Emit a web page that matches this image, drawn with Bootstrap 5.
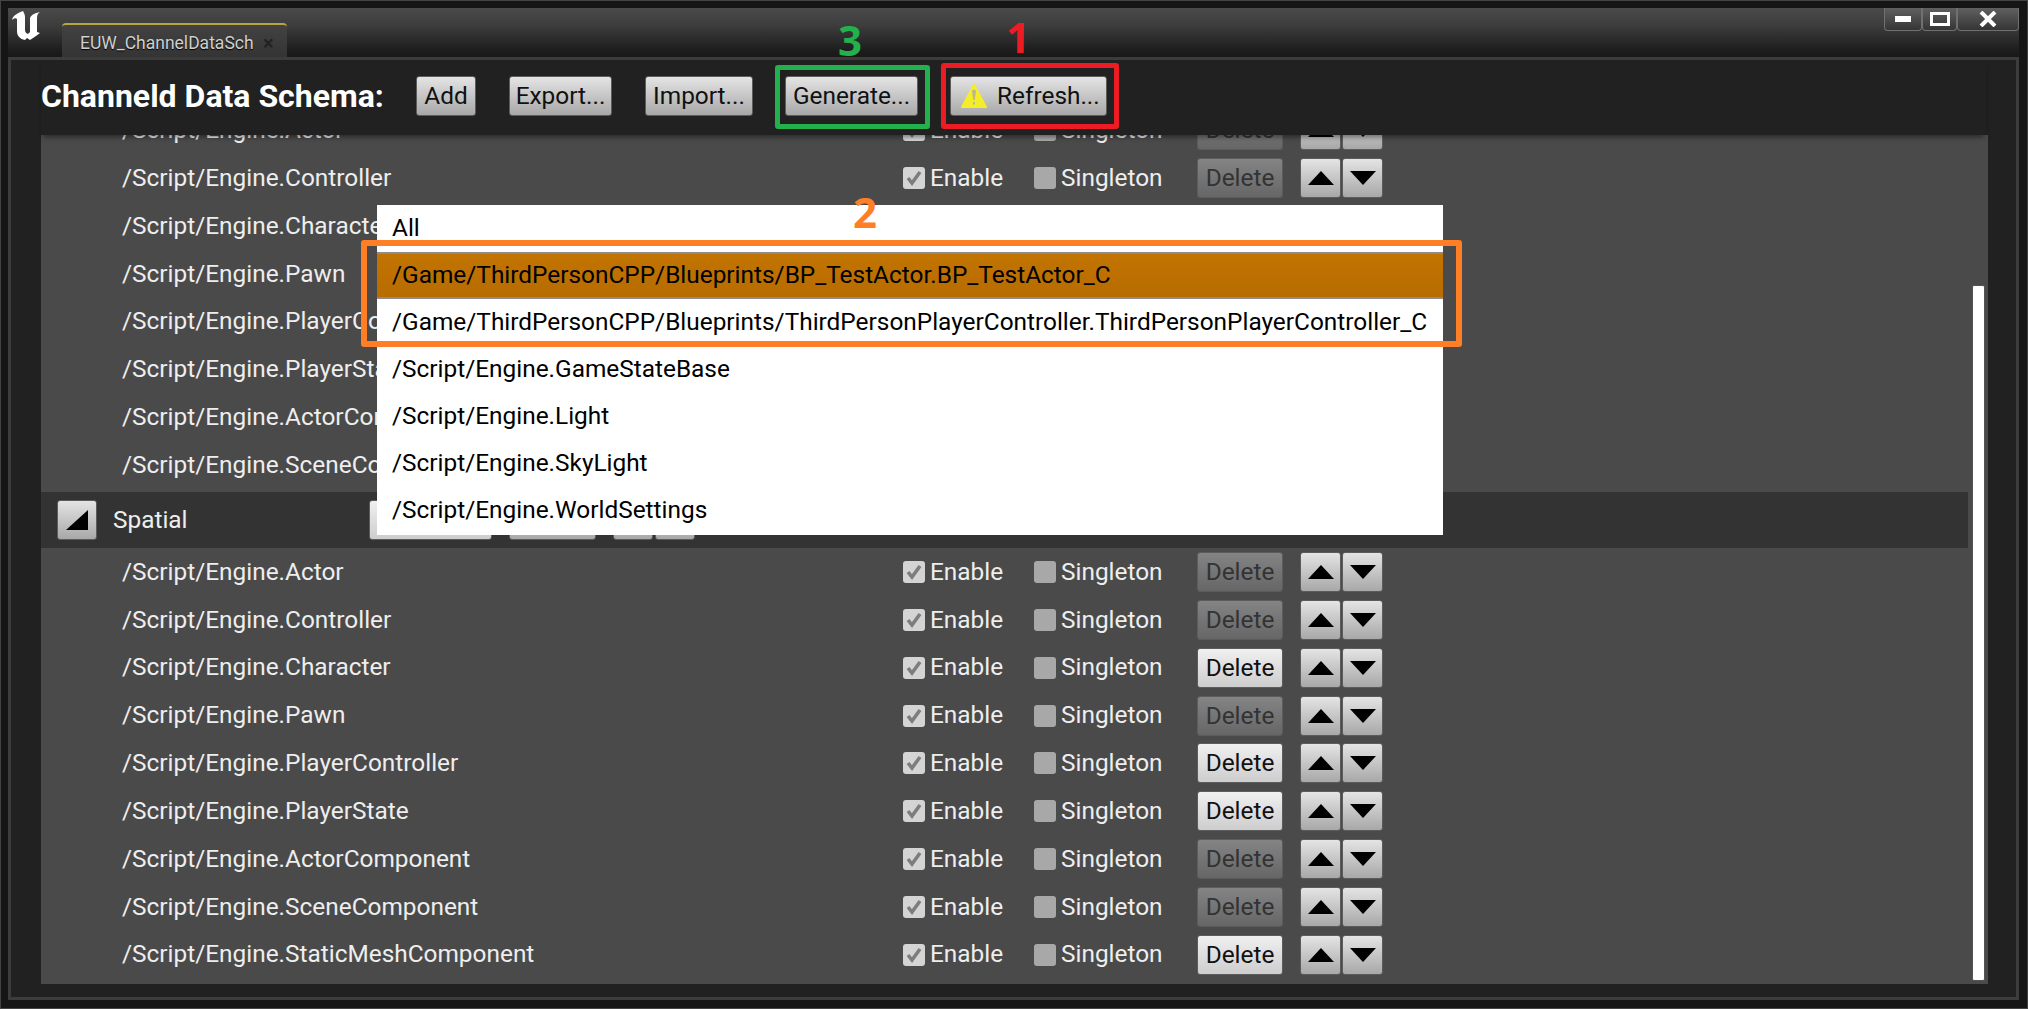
<!DOCTYPE html>
<html lang="en">
<head>
  <meta charset="UTF-8" />
  <title>EUW_ChannelDataSchema</title>
  <link href="https://cdn.jsdelivr.net/npm/bootstrap@5.3.3/dist/css/bootstrap.min.css" rel="stylesheet">
  <style>
    html, body { height: 100%; }
    body { background: #151515; overflow: hidden; font-family: Roboto, "Liberation Sans", sans-serif; }
    .ue-window { width: 2028px; height: 1009px; padding: 8px 8px 8px 7px; position: relative; border: 1px solid #444; }
    .ue-titlebar { height: 49px; margin-top: -1px; background: linear-gradient(#4a4a4a, #3d3d3d 35%, #1e1e1e 85%, #181818); position: relative; }
    .ue-logo { position: absolute; left: 4px; top: 3px; }
    .ue-tab { position: absolute; left: 54px; bottom: 0; width: 225px; height: 34px; background: linear-gradient(#424242, #343434); border-top: 2px solid #b5a642; border-radius: 4px 4px 0 0; padding: 6px 0 0 18px; color: #d0d0d0; font-size: 17.5px; line-height: 24px; text-shadow: 0 1px 1px #000; }
    .ue-tab-name { width: 173px; overflow: hidden; white-space: nowrap; }
    .ue-tab-x { color: #222; font-size: 20px; font-weight: 700; line-height: 24px; margin-left: 10px; text-shadow: none; }
    .win-btn { height: 23px; background: linear-gradient(#606060, #353535); border: 1px solid #707070; border-top: 0; border-radius: 0 0 4px 4px; }
    .ue-panel { height: 943px; background: #212121; border: 3px solid #3c3c3c; padding-left: 30px; }
    .ue-header { height: 75px; padding-bottom: 3px; position: relative; z-index: 2; box-shadow: 0 4px 5px -2px rgba(0,0,0,.45); background: #212121; margin-right: 30px; }
    .ue-title { color: #fff; font-size: 32px; font-weight: 700; width: 375px; white-space: nowrap; margin-top: -1px; }
    .ue-btn { height: 40px; background: linear-gradient(#e4e4e4, #a8a8a8); border: 1px solid #5c5c5c; border-radius: 3px; color: #111; font-size: 24.4px; line-height: 38px; padding: 0; text-align: center; flex: none; }
    .ue-btn.is-off { background: linear-gradient(#848484, #666); color: #333; }
    .ue-btn.is-flat { background: linear-gradient(#f0f0f0, #cdcdcd); }
    .ue-btn.has-icon { padding-left: 10px; gap: 10px; }
    .ue-scroll { height: 849px; width: 1947px; background: #4a4a4a; position: relative; overflow: hidden; }
    .ue-track { margin-top: -28.5px; width: 1927px; }
    .ue-row { height: 47.85px; padding-left: 81px; color: #eee; font-size: 24.4px; white-space: nowrap; }
    .ue-row-name { width: 781px; }
    .ue-check { width: 22px; height: 22px; background: #d4d4d4; border-radius: 3px; flex: none; }
    .ue-check svg { display: block; }
    .ue-check.is-empty { background: #a8a8a8; }
    .ue-label { margin-left: 5px; }
    .ue-section { height: 56px; background: #333; color: #eee; font-size: 24.4px; margin-top: 2.8px; padding-left: 16px; }
    .ue-thumb { position: absolute; left: 1931px; top: 150px; width: 13px; height: 696px; background: #fff; border: 1px solid #555; border-radius: 2px; }
    .ue-menu { position: absolute; left: 376px; top: 204px; width: 1066px; height: 330px; background: #fff; z-index: 3; color: #000; font-size: 24.4px; }
    .ue-menu-item { height: 47px; padding-left: 15px; white-space: nowrap; }
    .ue-menu-item.is-active { background: linear-gradient(#c27400, #b86c00); border-top: 2px solid #8c8c8c; border-bottom: 2px solid #8c8c8c; }
    .mark-box { position: absolute; z-index: 4; border-style: solid; border-radius: 3px; pointer-events: none; }
    .mark-num { position: absolute; z-index: 4; font-family: "Open Sans", sans-serif; font-weight: 700; font-size: 42px; line-height: 1; }
    .c-red { color: #ed1c24; border-color: #ed1c24; }
    .c-green { color: #22b14c; border-color: #22b14c; }
    .c-orange { color: #ff7f27; border-color: #ff7f27; }
  </style>
</head>
<body>
  <div class="ue-window">
    <div class="ue-titlebar">
      <svg class="ue-logo" width="30" height="30" viewBox="0 0 30 30"><path fill="#fff" d="M11 0 C6 2 1 4 0 9 C2 7 4 7 5 8 L5 20 C5 25 8 28 13 29 L15 27 L18 29 L24 25 L28 22 L25 21 L25 7 C25 4 26 2 28 1 C23 2 19 4 18 7 L18 21 L16 23 C14 22 13 21 13 19 L13 6 C13 4 12 2 11 0 Z"/></svg>
      <div class="ue-tab d-flex">
        <div class="ue-tab-name">EUW_ChannelDataSchema</div>
        <div class="ue-tab-x">×</div>
      </div>
      <div class="position-absolute top-0 end-0 d-flex" id="winButtons"></div>
    </div>
    <div class="ue-panel">
      <div class="ue-header d-flex align-items-center" id="header"></div>
      <div class="ue-scroll">
        <div class="ue-track" id="track"></div>
        <div class="ue-thumb"></div>
      </div>
    </div>

    <div class="ue-menu" id="menu"></div>

    <div class="mark-box c-green" style="left:774px;top:64px;width:155px;height:64px;border-width:5px"></div>
    <div class="mark-box c-red" style="left:940px;top:62px;width:178px;height:66px;border-width:5px"></div>
    <div class="mark-box c-orange" style="left:360px;top:239px;width:1101px;height:107px;border-width:6px"></div>
    <div class="mark-num c-green" style="left:837px;top:18px">3</div>
    <div class="mark-num c-red" style="left:1005px;top:15px">1</div>
    <div class="mark-num c-orange" style="left:852px;top:190px">2</div>
  </div>

  <script src="https://cdn.jsdelivr.net/npm/bootstrap@5.3.3/dist/js/bootstrap.bundle.min.js"></script>
  <script>
    const tri = (up) => `<svg width="26" height="14" viewBox="0 0 26 14"><path d="${up ? "M13 0 26 14H0Z" : "M0 0H26L13 14Z"}"/></svg>`;
    const check = `<svg width="22" height="22" viewBox="0 0 22 22"><path d="M5 11l4 5 8-11" fill="none" stroke="#7d7d7d" stroke-width="3.5"/></svg>`;

    function row(name, canDelete) {
      return `<div class="ue-row d-flex align-items-center">
        <div class="ue-row-name">${name}</div>
        <div class="ue-check">${check}</div><div class="ue-label" style="width:104px">Enable</div>
        <div class="ue-check is-empty"></div><div class="ue-label" style="width:136px">Singleton</div>
        <button class="ue-btn ${canDelete ? "is-flat" : "is-off"}" style="width:86px">Delete</button>
        <button class="ue-btn d-flex align-items-center justify-content-center" style="width:41px;margin-left:17px">${tri(true)}</button>
        <button class="ue-btn d-flex align-items-center justify-content-center" style="width:41px;margin-left:1px">${tri(false)}</button>
      </div>`;
    }

    const classes = ["Actor", "Controller", "Character", "Pawn", "PlayerController", "PlayerState", "ActorComponent", "SceneComponent"];
    const first = [0, 0, 0, 0, 0, 0, 0, 0];
    const second = [0, 0, 1, 0, 1, 1, 0, 0, 1];

    let html = classes.map((c, i) => row("/Script/Engine." + c, first[i])).join("");
    html += `<div class="ue-section d-flex align-items-center">
      <button class="ue-btn d-flex align-items-center justify-content-center" style="width:40px"><svg width="26" height="24" viewBox="0 0 26 24"><path d="M24 2V22H2Z"/></svg></button>
      <div style="margin-left:16px;width:256px">Spatial</div>
      <button class="ue-btn is-flat" style="width:123px">Add</button>
      <button class="ue-btn" style="width:87px;margin-left:17px">Delete</button>
      <button class="ue-btn" style="width:40px;margin-left:17px"></button>
      <button class="ue-btn" style="width:40px;margin-left:2px"></button>
    </div>`;
    html += [...classes, "StaticMeshComponent"].map((c, i) => row("/Script/Engine." + c, second[i])).join("");
    document.getElementById("track").innerHTML = html;

    const items = ["All", "/Game/ThirdPersonCPP/Blueprints/BP_TestActor.BP_TestActor_C", "/Game/ThirdPersonCPP/Blueprints/ThirdPersonPlayerController.ThirdPersonPlayerController_C", "/Script/Engine.GameStateBase", "/Script/Engine.Light", "/Script/Engine.SkyLight", "/Script/Engine.WorldSettings"];
    document.getElementById("menu").innerHTML = items.map((t, i) => `<div class="ue-menu-item d-flex align-items-center ${i === 1 ? "is-active" : ""}">${t}</div>`).join("");

    document.getElementById("header").innerHTML = `
      <div class="ue-title">Channeld Data Schema:</div>
      <button class="ue-btn" style="width:60px">Add</button>
      <button class="ue-btn" style="width:103px;margin-left:33px">Export...</button>
      <button class="ue-btn" style="width:108px;margin-left:33px">Import...</button>
      <button class="ue-btn" style="width:133px;margin-left:32px">Generate...</button>
      <button class="ue-btn has-icon d-flex align-items-center" style="width:157px;margin-left:32px"><svg width="26" height="26" viewBox="0 0 26 26"><path fill="#f4ee2a" stroke="#f4ee2a" stroke-width="2" stroke-linejoin="round" d="M13 2 25 24H1Z"/><path fill="#bdb98e" d="M11 8.5a2 2 0 0 1 4 0L13.8 17h-1.6ZM12 19h2v2.5h-2Z"/></svg>Refresh...</button>`;

    document.getElementById("winButtons").innerHTML = `
      <div class="win-btn d-flex align-items-center justify-content-center" style="width:38px"><svg width="16" height="6"><rect width="16" height="6" fill="#fff"/></svg></div>
      <div class="win-btn d-flex align-items-center justify-content-center" style="width:35px"><svg width="20" height="14"><rect x="1.5" y="1.5" width="17" height="11" fill="none" stroke="#fff" stroke-width="3"/></svg></div>
      <div class="win-btn d-flex align-items-center justify-content-center" style="width:62px"><svg width="18" height="16" viewBox="0 0 18 16"><path d="M2 1l14 14M16 1L2 15" stroke="#fff" stroke-width="4"/></svg></div>`;
  </script>
</body>
</html>
